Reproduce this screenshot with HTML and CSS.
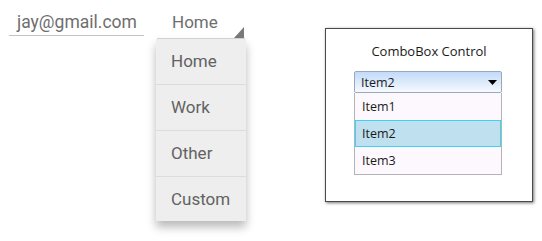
FILE: index.html
```html
<!DOCTYPE html>
<html lang="en">

<head>
  <meta charset="UTF-8">
  <title>Controls</title>
  <link rel="stylesheet" href="styles.css">
</head>

<body>
  <div class="page">
    <div class="email">jay@gmail.com</div>

    <div class="spinner">
      <div class="spinner-value">Home</div>
      <ul class="menu">
        <li>Home</li>
        <li>Work</li>
        <li>Other</li>
        <li>Custom</li>
      </ul>
    </div>

    <div class="panel">
      <div class="panel-title">ComboBox Control</div>
      <div class="combo">
        <div class="combo-head">
          <span>Item2</span>
          <svg width="9" height="5" viewBox="0 0 9 5"><path d="M0 0 H9 L4.5 5 Z" fill="#000" /></svg>
        </div>
        <ul class="combo-list">
          <li>Item1</li>
          <li class="selected">Item2</li>
          <li>Item3</li>
        </ul>
      </div>
    </div>
  </div>
</body>

</html>
```

FILE: styles.css
```css
html,
body {
  height: 100%;
}

body {
  margin: 0;
  background: #fff;
  font-family: Roboto, "Noto Sans", sans-serif;
}

.page {
  display: flex;
  align-items: flex-start;
  min-height: 241px;
  box-sizing: border-box;
  padding: 10px 0 0 9px;
}

.email {
  width: 127px;
  height: 25px;
  padding-left: 8px;
  border-bottom: 1px solid #c4c4c4;
  font-size: 17.5px;
  line-height: 25px;
  color: #6e6e6e;
}

.spinner {
  position: relative;
  margin-left: 13px;
  width: 88px;
}

.spinner-value {
  position: relative;
  height: 28px;
  padding-left: 15px;
  border-bottom: 1px solid #d6d6d6;
  font-size: 17px;
  line-height: 24px;
  color: #6e6e6e;
}

.spinner-value::after {
  content: "";
  position: absolute;
  right: 1px;
  bottom: 0;
  border-left: 10px solid transparent;
  border-bottom: 11px solid #7a7a7a;
}

.menu {
  position: absolute;
  top: 29px;
  left: -1px;
  width: 90px;
  margin: 0;
  padding: 0;
  list-style: none;
  background: #eeeeee;
  box-shadow: 0 6px 9px rgba(0, 0, 0, 0.28);
}

.menu li {
  height: 45px;
  padding-left: 15px;
  border-bottom: 1px solid #dcdcdc;
  font-size: 17px;
  line-height: 45px;
  color: #626262;
}

.menu li:last-child {
  border-bottom: none;
  height: 44px;
}

.panel {
  margin: 18px 0 0 80px;
  width: 206px;
  height: 172px;
  border: 1px solid #4a4a4a;
  box-shadow: 1px 1px 3px rgba(0, 0, 0, 0.55);
  font-family: "Open Sans", "DejaVu Sans", sans-serif;
  font-size: 12.5px;
  color: #1a1a1a;
}

.panel-title {
  margin-top: 12px;
  text-align: center;
  font-size: 13px;
  line-height: 20px;
}

.combo {
  margin: 10px 0 0 28px;
  width: 148px;
}

.combo-head {
  display: flex;
  align-items: center;
  justify-content: space-between;
  height: 20px;
  padding: 0 4px 0 6px;
  border: 1px solid #9aa9b8;
  border-radius: 2px;
  background: linear-gradient(#c2dafa, #f6f9fe);
}

.combo-list {
  margin: 0;
  padding: 0;
  list-style: none;
  background: #fdf8fd;
  border: 1px solid #b4b4b4;
  border-top: none;
}

.combo-list li {
  height: 27px;
  padding-left: 6px;
  line-height: 26px;
  box-sizing: border-box;
  border: 1px solid transparent;
}

.combo-list li.selected {
  background: #bee0ef;
  border-color: #3ed2f6;
}
```
